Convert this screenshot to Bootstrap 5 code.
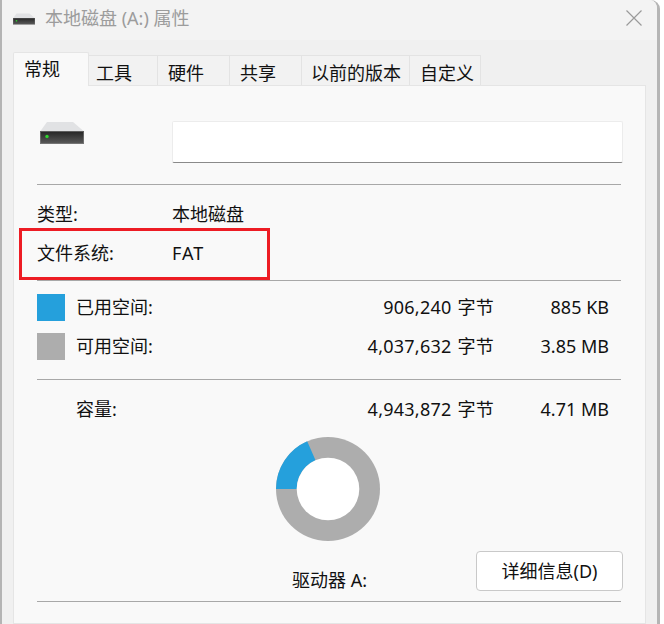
<!DOCTYPE html>
<html lang="zh">
<head>
<meta charset="utf-8">
<title>本地磁盘 (A:) 属性</title>
<link rel="stylesheet" href="https://cdn.jsdelivr.net/npm/bootstrap@5.3.0/dist/css/bootstrap.min.css">
<style>
html,body{height:624px;overflow:hidden;background:#fff}
body{font:18px/26px "Noto Sans","Noto Sans CJK SC",sans-serif;color:#111}
.dlg-edge{width:2px;background:#b4b4b4;flex:none}
.dlg{width:655px;height:624px;background:#f0f0f0;border-right:3px solid #b5b5b5;border-top-right-radius:9px;box-sizing:content-box}
.dlg-title{height:40px;background:#f3f3f3;padding-left:11px;color:#9c9c9c;border-top-right-radius:8px}
.dlg-title .ttl{margin-left:10px;margin-top:-3px}
.dlg-title .mini-drive{margin-top:-2px}
.dlg-x{margin-left:auto;margin-right:15px;margin-top:-3px}
.dlg-tabs{margin:12px 0 0 11px;height:33px;border:0;align-items:flex-end;flex-wrap:nowrap}
.dlg-tabs .nav-link{color:#111;background:#f2f2f2;border:1px solid #e3e3e3;border-left:0;border-bottom:0;border-radius:0;height:30px;padding:0 0 0 var(--tab-pad);line-height:34px;margin:0;text-align:left;white-space:nowrap}
.dlg-tabs .nav-link.active{background:#f9f9f9;color:#111;border:1px solid #e5e5e5;border-bottom:0;border-radius:2px 2px 0 0;height:34px;line-height:33px;position:relative;margin-bottom:-1px;z-index:2}
.tab-a{--tab-pad:10px;width:76px}.tab-b{--tab-pad:7px;width:69px}.tab-c{--tab-pad:10px;width:72px}.tab-d{--tab-pad:9px;width:108px}.tab-e{--tab-pad:10px;width:71px}
.dlg-panel{margin-left:11px;width:633px;height:540px;background:#f9f9f9;border:1px solid #e5e5e5;padding:0 24px 0 23px;position:relative}
.name-row{height:98px;padding-top:35px}
.drive-big{width:46px;height:24px;flex:none;margin-left:2px}
.name-box{margin-left:87px;width:451px;height:42px;border:1px solid #ececec;border-bottom:1px solid #8a8a8a;border-radius:2px;background:#fff;flex:none}
.rule{height:1px;background:#a8a8a8;opacity:1;margin:0;border:0}
.info-row{height:39px;line-height:39px}
.info-lab{width:135px;flex:none}
.info-block{padding-top:10px;height:95px}
.fat-val{letter-spacing:1px}
.use-row{height:39px;align-items:center}
.use-block{padding-top:7px;height:98px}
.swatch{width:28px;height:27px;flex:none;margin-right:11px}
.sw-used{background:#25a0dc}
.sw-free{background:#adadad}
.bytes{margin-left:auto;width:200px;text-align:right;letter-spacing:.25px;word-spacing:1px}
.size{width:115px;text-align:right;margin-right:12px}
.cap-row{height:59px;align-items:center;padding-left:39px}
.donut-wrap{height:112px;padding-left:238px;margin-top:-1px}
.donut-svg{display:block;margin-top:-3px}
.foot-row{height:53px;position:relative;padding-top:19px}
.drive-lab{margin-left:255px}
.detail-btn{position:absolute;left:439px;top:3px;width:147px;height:40px;background:#fff;border:1px solid #c9c9c9;border-radius:4px;padding:0;color:#111;font-size:18px;line-height:38px}
.redbox{position:absolute;left:5px;top:142px;width:251px;height:52px;border:3px solid #ed1c24;z-index:3;pointer-events:none}
</style>
</head>
<body>
<svg width="0" height="0" class="position-absolute">
<defs>
<linearGradient id="gb" x1="0" y1="0" x2="0" y2="1"><stop offset="0" stop-color="#242424"/><stop offset="1" stop-color="#5c5c5c"/></linearGradient>
<symbol id="drive" viewBox="0 0 44 24">
<path d="M7 1H33L43.500 10H.5Z" fill="#e1e2e4"/>
<rect x="0" y="10" width="44" height="13" fill="url(#gb)"/>
<rect x="0.500" y="10.500" width="43" height="12" fill="none" stroke="#8c8c8c" stroke-opacity=".55"/>
<circle cx="7" cy="15.500" r="1.700" fill="#2fd52f"/>
</symbol>
</defs>
</svg>
<div class="d-flex">
<div class="dlg-edge"></div>
<div class="dlg d-flex flex-column">
  <div class="dlg-title d-flex align-items-center">
    <svg class="mini-drive" width="22" height="12"><use href="#drive"/></svg>
    <span class="ttl">本地磁盘 (A:) 属性</span>
    <svg class="dlg-x" width="16" height="16" viewBox="0 0 16 16"><path d="M.5.500 15.500 15.500M15.500.500.5 15.500" stroke="#9a9a9a" stroke-width="1.200" fill="none"/></svg>
  </div>
  <ul class="nav nav-tabs dlg-tabs">
    <li class="nav-item"><a class="nav-link active tab-a" href="#">常规</a></li>
    <li class="nav-item"><a class="nav-link tab-b" href="#">工具</a></li>
    <li class="nav-item"><a class="nav-link tab-c" href="#">硬件</a></li>
    <li class="nav-item"><a class="nav-link tab-c" href="#">共享</a></li>
    <li class="nav-item"><a class="nav-link tab-d" href="#">以前的版本</a></li>
    <li class="nav-item"><a class="nav-link tab-e" href="#">自定义</a></li>
  </ul>
  <div class="dlg-panel">
    <div class="name-row d-flex align-items-start">
      <svg class="drive-big"><use href="#drive"/></svg>
      <div class="name-box"></div>
    </div>
    <hr class="rule">
    <div class="info-block">
      <div class="info-row d-flex"><span class="info-lab">类型:</span><span>本地磁盘</span></div>
      <div class="info-row d-flex"><span class="info-lab">文件系统:</span><span class="fat-val">FAT</span></div>
    </div>
    <hr class="rule">
    <div class="use-block">
      <div class="use-row d-flex"><span class="swatch sw-used"></span><span>已用空间:</span><span class="bytes">906,240 字节</span><span class="size">885 KB</span></div>
      <div class="use-row d-flex"><span class="swatch sw-free"></span><span>可用空间:</span><span class="bytes">4,037,632 字节</span><span class="size">3.85 MB</span></div>
    </div>
    <hr class="rule">
    <div class="cap-row d-flex"><span>容量:</span><span class="bytes">4,943,872 字节</span><span class="size">4.71 MB</span></div>
    <div class="donut-wrap">
      <svg class="donut-svg" width="106" height="106" viewBox="0 0 106 106">
        <circle cx="53" cy="53" r="52" fill="#adadad"/>
        <path d="M1 53A52 52 0 0 1 32.200 5.350L40.500 24.300A31.300 31.300 0 0 0 21.700 53Z" fill="#25a0dc"/>
        <circle cx="53" cy="53" r="31.300" fill="#fff"/>
      </svg>
    </div>
    <div class="foot-row">
      <div class="drive-lab">驱动器 A:</div>
      <button type="button" class="btn detail-btn">详细信息(D)</button>
    </div>
    <hr class="rule">
    <div class="redbox"></div>
  </div>
</div>
</div>
</body>
</html>
